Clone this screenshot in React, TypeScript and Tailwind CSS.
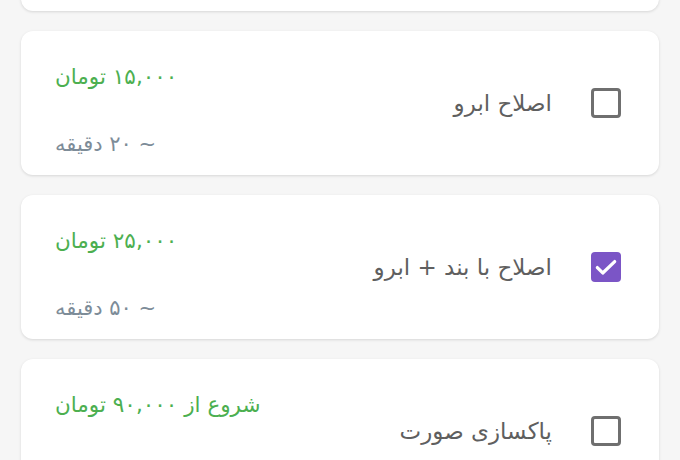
import React from "react";

type Item = { name: string; price: string; duration: string; checked: boolean };

const items: Item[] = [
  { name: "اصلاح صورت", price: "۱۰,۰۰۰ تومان", duration: "~ ۱۵ دقیقه", checked: false },
  { name: "اصلاح ابرو", price: "۱۵,۰۰۰ تومان", duration: "~ ۲۰ دقیقه", checked: false },
  { name: "اصلاح با بند + ابرو", price: "۲۵,۰۰۰ تومان", duration: "~ ۵۰ دقیقه", checked: true },
  { name: "پاکسازی صورت", price: "شروع از ۹۰,۰۰۰ تومان", duration: "~ ۶۰ دقیقه", checked: false },
];

function Checkbox({ checked }: { checked: boolean }) {
  if (checked) {
    return (
      <div className="w-[30px] h-[30px] rounded-[4px] bg-[#7b55c6] flex items-center justify-center shrink-0">
        <svg width="26" height="26" viewBox="0 0 24 24" fill="none">
          <path d="M4 12.5l5 5L20 7" stroke="white" strokeWidth="3" strokeLinecap="round" strokeLinejoin="round" />
        </svg>
      </div>
    );
  }
  return <div className="w-[30px] h-[30px] rounded-[4px] border-[3px] border-[#6f6f6f] shrink-0" />;
}

function Card({ item }: { item: Item }) {
  return (
    <div
      dir="rtl"
      className="h-[144px] bg-white rounded-[12px] shadow-[0_1px_3px_rgba(0,0,0,0.13)] flex items-stretch justify-between pr-[38px] pl-[34px]"
    >
      <div className="flex items-center gap-[39px]">
        <Checkbox checked={item.checked} />
        <span className="text-[23px] text-[#5f5f5f] leading-none">{item.name}</span>
      </div>
      <div className="flex flex-col items-end justify-between pt-[32px] pb-[17px]">
        <span className="text-[21.5px] text-[#4caf50] leading-[28px]">{item.price}</span>
        <span className="text-[21px] text-[#7d8c98] leading-[28px]">{item.duration}</span>
      </div>
    </div>
  );
}

export default function App() {
  return (
    <div
      className="w-[680px] h-[460px] overflow-hidden bg-[#f6f6f6]"
      style={{ fontFamily: '"DejaVu Sans", "Noto Sans", sans-serif' }}
    >
      <div className="flex flex-col gap-[20px] px-[21px] -mt-[133px]">
        {items.map((it, i) => (
          <Card key={i} item={it} />
        ))}
      </div>
    </div>
  );
}
